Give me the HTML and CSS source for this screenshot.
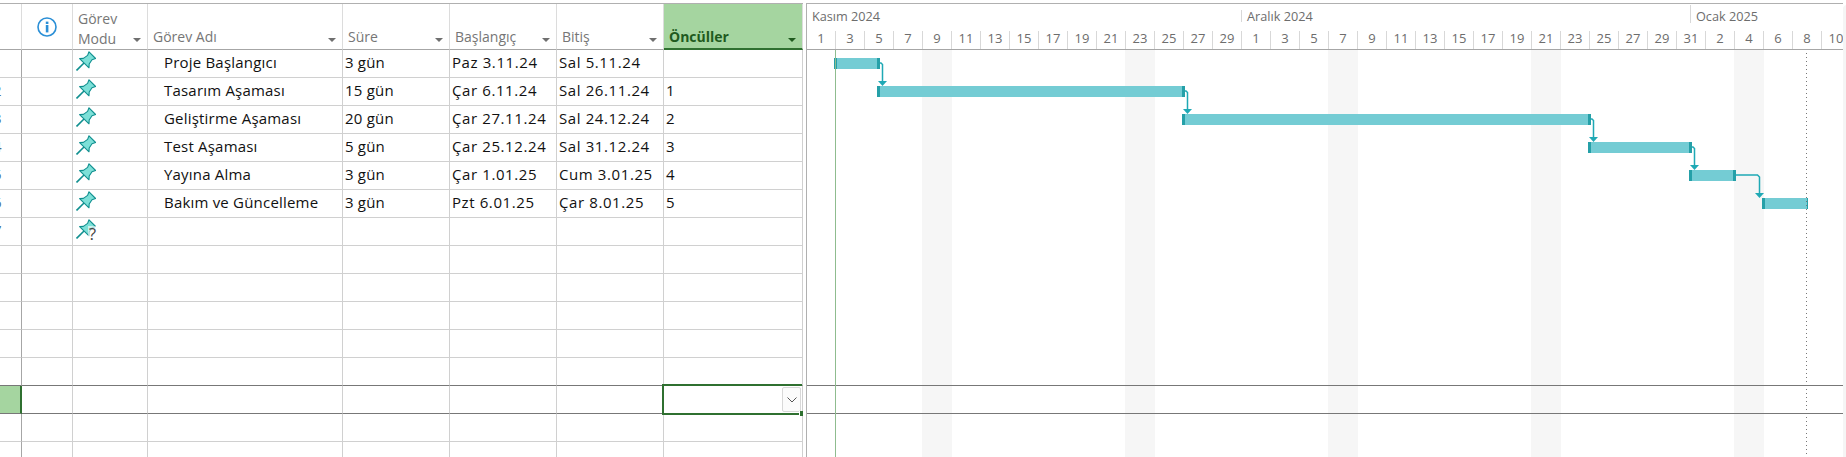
FILE: index.html
```html
<!DOCTYPE html>
<html lang="tr">
<head>
    <meta charset="UTF-8">
    <title>Proje Planı</title>
    <link rel="stylesheet" href="styles.css">
</head>
<body>

    <svg class="sprites" width="0" height="0">
        <symbol id="pin" viewBox="0 0 20 20">
            <path class="pin-needle" d="M8 12 L0.5 19.5"/>
            <path class="pin-body" d="M13 0.8 L19.6 7.5 L16 8.8 L13.2 13 L13 16.8 L3.6 7.6 L7.4 7.4 L11.6 4.4 Z"/>
        </symbol>
    </svg>

    <div class="app">
        <div class="sheet">
            <table class="grid">
                <colgroup>
                    <col class="c-num"><col class="c-info"><col class="c-mode"><col class="c-name">
                    <col class="c-date"><col class="c-date"><col class="c-date"><col class="c-pred">
                </colgroup>
                <thead>
                    <tr>
                        <th></th>
                        <th class="th-info">
                            <svg class="info" width="20" height="20" viewBox="0 0 20 20">
                                <circle cx="10" cy="10" r="9" fill="none" stroke="#2b8fd6" stroke-width="1.6"/>
                                <rect x="8.8" y="4.6" width="2.6" height="2.4" fill="#2b8fd6"/>
                                <rect x="8.8" y="8" width="2.6" height="7.4" fill="#2b8fd6"/>
                            </svg>
                        </th>
                        <th><div class="th-in th-two"><span>Görev<br>Modu</span><i class="arrow"></i></div></th>
                        <th><div class="th-in"><span>Görev Adı</span><i class="arrow"></i></div></th>
                        <th><div class="th-in"><span>Süre</span><i class="arrow"></i></div></th>
                        <th><div class="th-in"><span>Başlangıç</span><i class="arrow"></i></div></th>
                        <th><div class="th-in"><span>Bitiş</span><i class="arrow"></i></div></th>
                        <th class="th-active"><div class="th-in"><span>Öncüller</span><i class="arrow"></i></div></th>
                    </tr>
                </thead>
                <tbody>
                    <tr>
                        <td class="num"><span>1</span></td><td></td>
                        <td class="mode"><svg class="pin"><use href="#pin"/></svg></td>
                        <td class="name">Proje Başlangıcı</td>
                        <td>3 gün</td><td class="date">Paz 3.11.24</td><td class="date">Sal 5.11.24</td><td></td>
                    </tr>
                    <tr>
                        <td class="num"><span>2</span></td><td></td>
                        <td class="mode"><svg class="pin"><use href="#pin"/></svg></td>
                        <td class="name">Tasarım Aşaması</td>
                        <td>15 gün</td><td class="date">Çar 6.11.24</td><td class="date">Sal 26.11.24</td><td class="pred">1</td>
                    </tr>
                    <tr>
                        <td class="num"><span>3</span></td><td></td>
                        <td class="mode"><svg class="pin"><use href="#pin"/></svg></td>
                        <td class="name">Geliştirme Aşaması</td>
                        <td>20 gün</td><td class="date">Çar 27.11.24</td><td class="date">Sal 24.12.24</td><td class="pred">2</td>
                    </tr>
                    <tr>
                        <td class="num"><span>4</span></td><td></td>
                        <td class="mode"><svg class="pin"><use href="#pin"/></svg></td>
                        <td class="name">Test Aşaması</td>
                        <td>5 gün</td><td class="date">Çar 25.12.24</td><td class="date">Sal 31.12.24</td><td class="pred">3</td>
                    </tr>
                    <tr>
                        <td class="num"><span>5</span></td><td></td>
                        <td class="mode"><svg class="pin"><use href="#pin"/></svg></td>
                        <td class="name">Yayına Alma</td>
                        <td>3 gün</td><td class="date">Çar 1.01.25</td><td class="date">Cum 3.01.25</td><td class="pred">4</td>
                    </tr>
                    <tr>
                        <td class="num"><span>6</span></td><td></td>
                        <td class="mode"><svg class="pin"><use href="#pin"/></svg></td>
                        <td class="name">Bakım ve Güncelleme</td>
                        <td>3 gün</td><td class="date">Pzt 6.01.25</td><td class="date">Çar 8.01.25</td><td class="pred">5</td>
                    </tr>
                    <tr>
                        <td class="num"><span>7</span></td><td></td>
                        <td class="mode"><svg class="pin"><use href="#pin"/></svg><span class="unknown">?</span></td>
                        <td></td><td></td><td></td><td></td><td></td>
                    </tr>
                    <tr><td class="num"></td><td></td><td></td><td></td><td></td><td></td><td></td><td></td></tr>
                    <tr><td class="num"></td><td></td><td></td><td></td><td></td><td></td><td></td><td></td></tr>
                    <tr><td class="num"></td><td></td><td></td><td></td><td></td><td></td><td></td><td></td></tr>
                    <tr><td class="num"></td><td></td><td></td><td></td><td></td><td></td><td></td><td></td></tr>
                    <tr class="above-selected"><td class="num"></td><td></td><td></td><td></td><td></td><td></td><td></td><td></td></tr>
                    <tr class="selected">
                        <td class="num"></td><td></td><td></td><td></td><td></td><td></td><td></td>
                        <td class="editing">
                            <div class="edit-box"></div>
                            <div class="drop-btn">
                                <svg width="10" height="6" viewBox="0 0 10 6"><path d="M0.5 0.5 L5 5 L9.5 0.5" fill="none" stroke="#555" stroke-width="1"/></svg>
                            </div>
                            <div class="handle"></div>
                        </td>
                    </tr>
                    <tr><td class="num"></td><td></td><td></td><td></td><td></td><td></td><td></td><td></td></tr>
                    <tr><td class="num"></td><td></td><td></td><td></td><td></td><td></td><td></td><td></td></tr>
                </tbody>
            </table>
        </div>

        <div class="gantt">
            <div class="months">
                <div class="month month-nov">Kasım 2024</div>
                <div class="month month-dec">Aralık 2024</div>
                <div class="month month-jan">Ocak 2025</div>
            </div>
            <div class="days">
                <span>1</span><span>3</span><span>5</span><span>7</span><span>9</span><span>11</span><span>13</span><span>15</span><span>17</span><span>19</span><span>21</span><span>23</span><span>25</span><span>27</span><span>29</span>
                <span>1</span><span>3</span><span>5</span><span>7</span><span>9</span><span>11</span><span>13</span><span>15</span><span>17</span><span>19</span><span>21</span><span>23</span><span>25</span><span>27</span><span>29</span><span>31</span>
                <span>2</span><span>4</span><span>6</span><span>8</span><span>10</span>
            </div>
            <div class="chart">
                <div class="weekend" style="left: 115px"></div>
                <div class="weekend" style="left: 318px"></div>
                <div class="weekend" style="left: 521px"></div>
                <div class="weekend" style="left: 724px"></div>
                <div class="weekend" style="left: 927px"></div>

                <div class="row-line" style="top: 335px"></div>
                <div class="row-line" style="top: 363px"></div>

                <div class="bar" style="left: 27px; top: 8px; width: 46px"></div>
                <div class="bar" style="left: 70px; top: 36px; width: 308px"></div>
                <div class="bar" style="left: 375px; top: 64px; width: 409px"></div>
                <div class="bar" style="left: 781px; top: 92px; width: 104px"></div>
                <div class="bar" style="left: 882px; top: 120px; width: 47px"></div>
                <div class="bar bar-end" style="left: 955px; top: 148px; width: 46px"></div>

                <svg class="links" width="1035" height="407">
                    <path d="M73 13 H74 L75.5 14.5 V32"/>
                    <path d="M378 41 H379 L380.5 42.5 V60"/>
                    <path d="M784 69 H785 L786.5 70.5 V88"/>
                    <path d="M885 97 H886 L887.5 98.5 V116"/>
                    <path d="M929 125 H950.5 L952.5 127 V144"/>
                    <polygon points="71,31 80,31 75.5,36"/>
                    <polygon points="376,59 385,59 380.5,64"/>
                    <polygon points="782,87 791,87 786.5,92"/>
                    <polygon points="883,115 892,115 887.5,120"/>
                    <polygon points="948,143 957,143 952.5,148"/>
                </svg>

                <div class="today"></div>
                <div class="finish"></div>
            </div>
        </div>

        <div class="scroll-edge"></div>
    </div>

</body>
</html>
```
FILE: styles.css
```css
html, body {
    margin: 0;
    height: 100%;
    background: #fff;
    overflow: hidden;
}
body {
    font-family: 'Open Sans', 'Noto Sans', sans-serif;
    font-size: 14px;
    color: #111;
}
.sprites {
    display: block;
    height: 0;
}
.app {
    display: flex;
    height: 454px;
    padding-top: 3px;
    overflow: hidden;
}

/* left sheet */
.sheet {
    flex: 0 0 803px;
    border-top: 1px solid #b0b0b0;
    height: 453px;
    overflow: hidden;
}
.grid {
    table-layout: fixed;
    width: 803px;
    border-collapse: separate;
    border-spacing: 0;
}
.c-num { width: 22px; }
.c-info { width: 51px; }
.c-mode { width: 75px; }
.c-name { width: 195px; }
.c-date { width: 107px; }
.c-pred { width: 139px; }

.grid th {
    height: 45px;
    padding: 0;
    border-right: 1px solid #dcdcdc;
    border-bottom: 1px solid #a6a6a6;
    font-weight: 400;
    color: #767676;
    text-align: left;
    vertical-align: bottom;
}
.th-in {
    display: flex;
    align-items: flex-end;
    justify-content: space-between;
    padding: 0 6px 2px 5px;
    line-height: 20px;
}
.arrow {
    width: 0;
    height: 0;
    margin-bottom: 5px;
    border-left: 4.5px solid transparent;
    border-right: 4.5px solid transparent;
    border-top: 4px solid #6f6f6f;
}
.th-two {
    padding-bottom: 0;
}
.th-two .arrow {
    margin-bottom: 7px;
}
.grid .th-info {
    vertical-align: middle;
}
.info {
    display: block;
    margin: 0 0 0 15px;
}
.grid .th-active {
    height: 44px;
    background: #a5d5a0;
    color: #1f5a1e;
    font-weight: 700;
    border-bottom: 2px solid #2f7030;
}
.th-active .th-in {
    padding-bottom: 1px;
}
.th-active .arrow {
    border-top-color: #1f5a1e;
}

.grid td {
    height: 27px;
    padding: 0 3px 0 2px;
    border-right: 1px solid #d0d0d0;
    border-bottom: 1px solid #d0d0d0;
    white-space: nowrap;
    overflow: hidden;
    font-size: 15px;
    letter-spacing: 0.2px;
    line-height: 25px;
    vertical-align: top;
}
.grid td.date {
    letter-spacing: 0.6px;
}
.grid td.num {
    padding: 0;
    border-right: 1px solid #a6a6a6;
    color: #4a6c8c;
}
.num span {
    display: block;
    margin-left: -7px;
}
.grid td.name {
    padding-left: 16px;
}
.grid td.mode {
    position: relative;
    padding: 0;
    overflow: visible;
}
.pin {
    display: block;
    width: 20px;
    height: 20px;
    margin: 1px 0 0 3px;
}
.pin-body {
    fill: #7de0d8;
    stroke: #0f8f8f;
    stroke-width: 1.1;
    stroke-linejoin: round;
}
.pin-needle {
    fill: none;
    stroke: #0f8f8f;
    stroke-width: 1.6;
}
.unknown {
    position: absolute;
    left: 15px;
    top: 8px;
    width: 9px;
    height: 15px;
    font-size: 17px;
    letter-spacing: 0;
    line-height: 15px;
    color: #444;
    background: rgba(255, 255, 255, 0.6);
    text-align: center;
}

.above-selected td, .selected td {
    border-bottom-color: #777;
}
.grid .selected .num {
    background: #a5d5a0;
    border-right: 2px solid #2f7030;
}
.grid td.editing {
    position: relative;
    padding: 0;
    overflow: visible;
}
.edit-box {
    position: absolute;
    left: -2px;
    top: -2px;
    right: 0;
    bottom: -2px;
    border: 2px solid #2f7030;
    border-right: none;
}
.drop-btn {
    position: absolute;
    left: 118px;
    top: 1px;
    width: 17px;
    height: 23px;
    display: flex;
    align-items: center;
    justify-content: center;
    background: #fbfbfb;
    border: 1px solid #d8d8d8;
    border-radius: 2px;
}
.handle {
    position: absolute;
    right: -1px;
    bottom: -3px;
    width: 3px;
    height: 5px;
    background: #2f7030;
    border-left: 1px solid #fff;
}

/* gantt side */
.gantt {
    flex: 0 0 1036px;
    margin-left: 3px;
    border-top: 1px solid #b0b0b0;
    border-left: 1px solid #b0b0b0;
    height: 453px;
    overflow: hidden;
    color: #6d6d6d;
    font-size: 13px;
    display: flex;
    flex-direction: column;
}
.months {
    display: flex;
    height: 27px;
    font-size: 12.7px;
}
.month {
    flex: none;
    position: relative;
    box-sizing: border-box;
    padding: 4px 0 0 5px;
    line-height: 17px;
}
.month-nov { width: 434px; }
.month-dec { width: 449px; padding-left: 6px; }
.month-jan { width: 152px; padding-left: 6px; }
.month-dec::before, .month-jan::before {
    content: "";
    position: absolute;
    left: 0;
    width: 1px;
    background: #d8d8d8;
}
.month-dec::before { top: 6px; height: 12px; }
.month-jan::before { top: 1px; height: 18px; }
.days {
    display: flex;
    height: 18px;
    border-bottom: 1px solid #a6a6a6;
}
.days span {
    flex: 0 0 29px;
    box-sizing: border-box;
    border-right: 1px solid #d8d8d8;
    text-align: center;
    line-height: 15px;
}
.chart {
    position: relative;
    flex: 1;
}
.weekend {
    position: absolute;
    top: 0;
    bottom: 0;
    width: 30px;
    background: #f6f6f6;
}
.row-line {
    position: absolute;
    left: 0;
    right: 0;
    height: 1px;
    background: #777;
}
.bar {
    position: absolute;
    box-sizing: border-box;
    height: 11px;
    background: #74ccd4;
    border-left: 3px solid #25a0a8;
    border-right: 3px solid #25a0a8;
}
.bar-end {
    border-right: 1px solid #25a0a8;
}
.links {
    position: absolute;
    left: 0;
    top: 0;
}
.links path {
    fill: none;
    stroke: #1fa9b5;
    stroke-width: 1.5;
}
.links polygon {
    fill: #1fa9b5;
}
.today {
    position: absolute;
    left: 28px;
    top: 0;
    bottom: 0;
    width: 1px;
    background: #8fbc8f;
}
.finish {
    position: absolute;
    left: 999px;
    top: 3px;
    bottom: 0;
    width: 1px;
    background: linear-gradient(#777 25%, transparent 25%) 0 0 / 1px 4px;
}
.scroll-edge {
    flex: 0 0 4px;
    margin-top: 2px;
    background: #f5f5f5;
    border-top-left-radius: 4px;
}
```
